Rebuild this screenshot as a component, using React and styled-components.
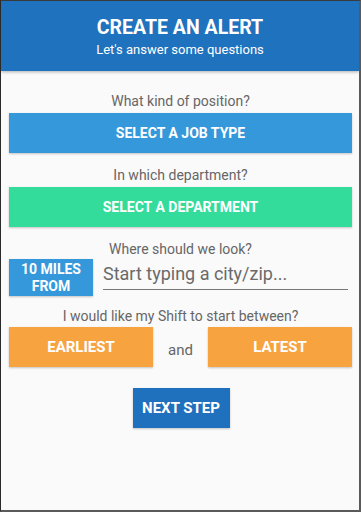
import React from "react";
import styled, { createGlobalStyle } from "styled-components";

const Global = createGlobalStyle`
  html, body { margin: 0; padding: 0; background: #fafafa; }
  body { font-family: Roboto, "Liberation Sans", Arial, sans-serif; }
  * { box-sizing: border-box; }
`;

const Frame = styled.div`
  width: 361px;
  height: 512px;
  background: #fafafa;
  border-top: 1px solid #3a3a3a;
  border-left: 1px solid #2a2a2a;
  border-right: 2px solid #5a5a5a;
  border-bottom: 2px solid #5a5a5a;
  display: flex;
  flex-direction: column;
  overflow: hidden;
`;

const Header = styled.header`
  height: 70px;
  background: #1f72bd;
  color: #fff;
  display: flex;
  flex-direction: column;
  align-items: center;
  justify-content: center;
  box-shadow: 0 1px 3px rgba(0, 0, 0, 0.3);
  padding-top: 2px;
`;

const Title = styled.h1`
  margin: 0;
  font-size: 19.5px;
  font-weight: 700;
  line-height: 22px;
`;

const Subtitle = styled.div`
  font-size: 13px;
  line-height: 16px;
  margin-top: 3px;
`;

const Body = styled.main`
  display: flex;
  flex-direction: column;
  padding: 20px 7px 0 8px;
`;

const Section = styled.section`
  display: flex;
  flex-direction: column;
  gap: ${(p) => p.$gap ?? 2}px;
  margin-bottom: ${(p) => p.$after ?? 12}px;
`;

const Label = styled.div`
  text-align: center;
  color: #666;
  font-size: 14px;
  line-height: 20px;
  height: 20px;
`;

const Button = styled.button`
  border: none;
  margin: 0;
  font-family: inherit;
  color: #fff;
  font-weight: 700;
  font-size: ${(p) => p.$size ?? 14}px;
  background: ${(p) => p.$bg};
  height: 40px;
  width: 100%;
  box-shadow: 0 1px 2px rgba(0, 0, 0, 0.22);
  cursor: pointer;
  text-transform: uppercase;
`;

const LocationRow = styled.div`
  display: grid;
  grid-template-columns: 84px 1fr;
  column-gap: 10px;
  align-items: start;
  padding-right: 4px;
`;

const MilesBox = styled.div`
  background: #3498db;
  color: #fff;
  font-weight: 700;
  font-size: 14px;
  line-height: 17px;
  height: 37px;
  display: flex;
  align-items: center;
  justify-content: center;
  text-align: center;
  box-shadow: 0 1px 2px rgba(0, 0, 0, 0.22);
`;

const CityInput = styled.input`
  border: none;
  border-bottom: 1px solid #777;
  background: transparent;
  font-family: inherit;
  font-size: 18px;
  color: #333;
  height: 31px;
  padding: 0 0 2px 0;
  margin: 0;
  width: 100%;
  outline: none;
  &::placeholder { color: #6a6a6a; }
`;

const ShiftRow = styled.div`
  display: grid;
  grid-template-columns: 1fr 55px 1fr;
  align-items: center;
`;

const And = styled.span`
  text-align: center;
  color: #666;
  font-size: 15px;
  padding-top: 6px;
`;

const NextWrap = styled.div`
  display: flex;
  justify-content: center;
  margin-top: 9px;
  padding-left: 1px;
`;

const NextButton = styled(Button)`
  width: 97px;
  background: #1f70bd;
  font-size: 15px;
`;

export default function App() {
  return (
    <>
      <Global />
      <Frame>
        <Header>
          <Title>CREATE AN ALERT</Title>
          <Subtitle>Let's answer some questions</Subtitle>
        </Header>
        <Body>
          <Section>
            <Label>What kind of position?</Label>
            <Button $bg="#3498db">Select a job type</Button>
          </Section>
          <Section>
            <Label>In which department?</Label>
            <Button $bg="#33dc9a">Select a department</Button>
          </Section>
          <Section $gap={-1} $after={10}>
            <Label>Where should we look?</Label>
            <LocationRow>
              <MilesBox>
                10 MILES
                <br />
                FROM
              </MilesBox>
              <CityInput placeholder="Start typing a city/zip..." />
            </LocationRow>
          </Section>
          <Section $gap={1}>
            <Label>I would like my Shift to start between?</Label>
            <ShiftRow>
              <Button $bg="#f7a440" $size={15}>Earliest</Button>
              <And>and</And>
              <Button $bg="#f7a440" $size={15}>Latest</Button>
            </ShiftRow>
          </Section>
          <NextWrap>
            <NextButton>Next step</NextButton>
          </NextWrap>
        </Body>
      </Frame>
    </>
  );
}
